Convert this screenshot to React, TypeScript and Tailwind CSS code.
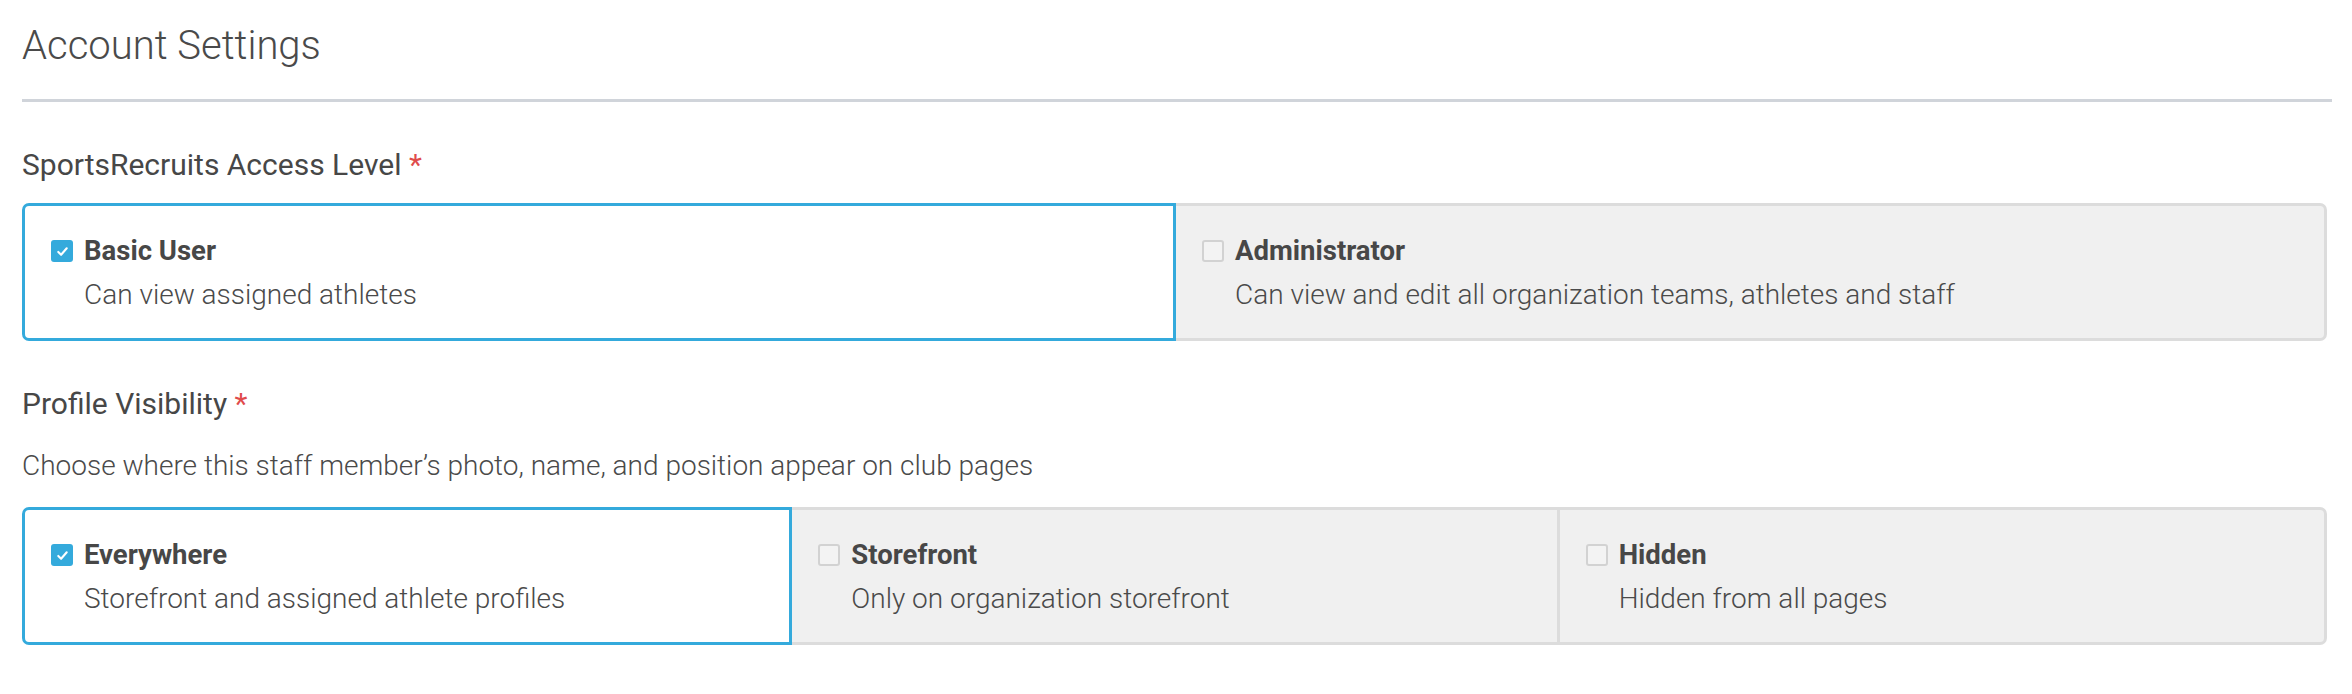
import React from 'react';

type Option = {
  title: string;
  description: string;
  selected?: boolean;
};

const accessOptions: Option[] = [
  { title: 'Basic User', description: 'Can view assigned athletes', selected: true },
  { title: 'Administrator', description: 'Can view and edit all organization teams, athletes and staff' },
];

const visibilityOptions: Option[] = [
  { title: 'Everywhere', description: 'Storefront and assigned athlete profiles', selected: true },
  { title: 'Storefront', description: 'Only on organization storefront' },
  { title: 'Hidden', description: 'Hidden from all pages' },
];

const Checkbox: React.FC<{ checked?: boolean }> = ({ checked }) =>
  checked ? (
    <span className="flex h-[22px] w-[22px] shrink-0 items-center justify-center rounded-[3px] bg-[#34aadc]">
      <svg viewBox="0 0 16 16" className="h-[15px] w-[15px]" fill="none" stroke="white" strokeWidth={2.2} strokeLinecap="round" strokeLinejoin="round">
        <polyline points="3.5,8.5 6.5,11.5 12.5,4.5" />
      </svg>
    </span>
  ) : (
    <span className="block h-[22px] w-[22px] shrink-0 rounded-[3px] border-2 border-[#d2d2d2] bg-[#f3f3f3]" />
  );

const OptionGroup: React.FC<{ options: Option[] }> = ({ options }) => (
  <div className="mr-[5px] flex">
    {options.map((opt, i) => {
      const first = i === 0;
      const last = i === options.length - 1;
      return (
        <div
          key={opt.title}
          className={`flex-1 border-[3px] pt-[24px] pb-[20px] pl-[26px] pr-[20px] ${first ? 'rounded-l-[7px]' : '-ml-[3px]'} ${last ? 'rounded-r-[7px]' : ''} ${
            opt.selected ? 'relative z-10 border-[#34aadc] bg-white' : 'border-[#dcdcdc] bg-[#f0f0f0]'
          }`}
        >
          <div className="flex h-[42px] items-center gap-[11px]">
            <Checkbox checked={opt.selected} />
            <span className="text-[27.5px] font-bold leading-[42px] text-[#474747]">{opt.title}</span>
          </div>
          <div className="pl-[33px] text-[28px] font-light leading-[46px] text-[#4a4a4a]">{opt.description}</div>
        </div>
      );
    })}
  </div>
);

const SectionLabel: React.FC<{ children: React.ReactNode; className?: string }> = ({ children, className }) => (
  <div className={`text-[30px] leading-[40px] text-[#474747] ${className ?? ''}`}>
    {children} <span className="text-[#e04b4b]">*</span>
  </div>
);

export default function App() {
  return (
    <div className="min-h-screen bg-white pt-[21px] pl-[22px] pr-[20px]" style={{ fontFamily: 'Roboto, "Liberation Sans", sans-serif' }}>
      <h1 className="text-[40px] font-light leading-[50px] text-[#4a4a4a]">Account Settings</h1>
      <div className="mt-[28px] h-[3px] bg-[#d0d4da]" />

      <SectionLabel className="mt-[43px]">SportsRecruits Access Level</SectionLabel>
      <div className="mt-[18px]">
        <OptionGroup options={accessOptions} />
      </div>

      <SectionLabel className="mt-[43px]">Profile Visibility</SectionLabel>
      <p className="mt-[22px] text-[28px] font-light leading-[40px] text-[#4a4a4a]">
        Choose where this staff member’s photo, name, and position appear on club pages
      </p>
      <div className="mt-[21px]">
        <OptionGroup options={visibilityOptions} />
      </div>
    </div>
  );
}
